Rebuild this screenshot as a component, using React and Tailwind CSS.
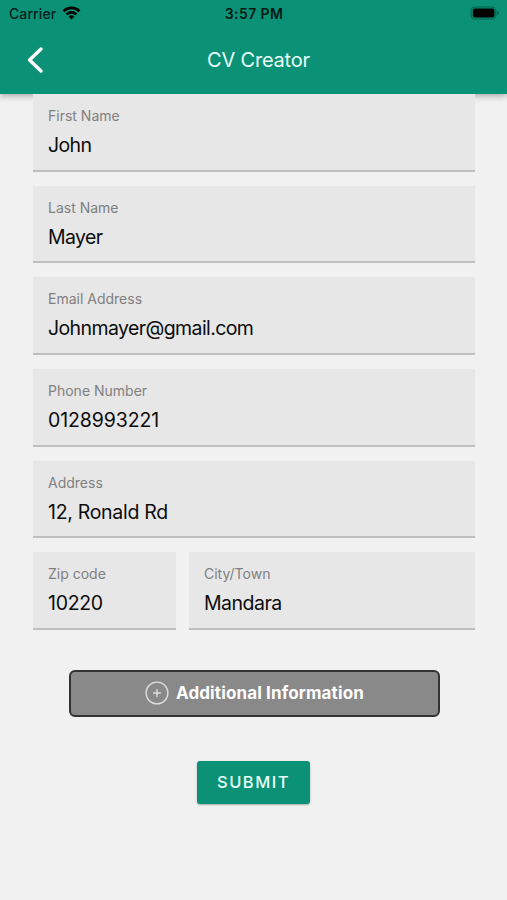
const StatusBar = () => (
  <div className="flex h-[28px] items-center justify-between pl-[9px] pr-[7px] text-[#03201a]">
    <div className="flex flex-1 items-center gap-[6px]">
      <span className="text-[14px] leading-[20px] tracking-[0.1px] -mt-[1px] font-medium">Carrier</span>
      <svg className="-mt-[2px] h-[14px] w-[19px]" viewBox="0 0 18 14" fill="none" stroke="#000" strokeWidth="2.6">
        <path d="M1 5.2a11.4 11.4 0 0 1 16 0" />
        <path d="M4.1 8.4a7 7 0 0 1 9.8 0" />
        <path d="M9 13.4 6.2 10.6a4 4 0 0 1 5.6 0Z" fill="#000" stroke="none" />
      </svg>
    </div>
    <span className="-mt-[2px] mr-[1px] text-[14px] font-semibold tracking-[0.4px] text-[#021a14]">3:57 PM</span>
    <div className="flex flex-1 justify-end">
      <svg className="-mt-[2px] h-[14px] w-[30px]" viewBox="0 0 30 14">
        <rect x="1.2" y="1" width="24.6" height="12" rx="3.6" fill="none" stroke="#06654f" strokeWidth="1.2" />
        <rect x="2.8" y="2.6" width="21.6" height="8.8" rx="2" fill="#000" />
        <path d="M27.2 4.8v4.4a2.3 2.3 0 0 0 0-4.4Z" fill="#06654f" />
      </svg>
    </div>
  </div>
);

const Header = () => (
  <header className="h-[94px] bg-[#0b9176] shadow-[0_2px_6px_rgba(0,0,0,0.3)]">
    <StatusBar />
    <div className="flex h-[64px] items-center">
      <button className="flex w-[80px] pl-[26px]" aria-label="Back">
        <svg className="h-[28px] w-[18px]" viewBox="0 0 18 28" fill="none" stroke="#fff" strokeWidth="3.4" strokeLinecap="round" strokeLinejoin="round">
          <path d="M15 3 3.5 14 15 25" />
        </svg>
      </button>
      <h1 className="flex-1 pr-[70px] text-center text-[20px] tracking-[-0.2px] text-[#e8fffa]">CV Creator</h1>
    </div>
  </header>
);

const Field = ({ label, value, tracking = 'tracking-[-0.6px]', className = 'w-full' }) => (
  <div className={`flex h-[77.67px] flex-col border-b-2 border-[#bfbfbf] bg-[#e7e7e7] pl-[15px] pt-[12px] ${className}`}>
    <span className="text-[14px] leading-[20px] text-[#808080]">{label}</span>
    <span className={`mt-[5px] text-[19.5px] leading-[28px] text-[#0c0c0c] ${tracking}`}>{value}</span>
  </div>
);

const fields = [
  { label: 'First Name', value: 'John' },
  { label: 'Last Name', value: 'Mayer' },
  { label: 'Email Address', value: 'Johnmayer@gmail.com' },
  { label: 'Phone Number', value: '0128993221', tracking: 'tracking-[-0.1px]' },
  { label: 'Address', value: '12, Ronald Rd', tracking: 'tracking-[-0.3px]' },
];

export default function App() {
  return (
    <div className="flex h-[900px] w-[507px] flex-col bg-[#f1f1f1] font-['Inter',sans-serif]">
      <Header />
      <main className="relative flex flex-col pl-[33px] pr-[32px]">
        <div className="flex flex-col gap-[14px]">
          {fields.map((field) => (
            <Field key={field.label} label={field.label} value={field.value} tracking={field.tracking} />
          ))}
          <div className="flex gap-[13px]">
            <Field label="Zip code" value="10220" tracking="tracking-[-0.3px]" className="w-[143px]" />
            <Field label="City/Town" value="Mandara" tracking="tracking-[-0.5px]" className="flex-1" />
          </div>
        </div>

        <button className="mt-[40px] ml-[36px] flex h-[47px] w-[371px] items-center justify-center gap-[7px] rounded-[6px] border-2 border-[#333] bg-[#898989]">
          <svg className="h-[24px] w-[24px]" viewBox="0 0 24 24" fill="none" stroke="#dedede" strokeWidth="1.4" strokeLinecap="round">
            <circle cx="12" cy="12" r="10.9" />
            <path d="M12 8.6v6.8M8.6 12h6.8" />
          </svg>
          <span className="text-[17px] font-bold tracking-[0.13px] text-white">Additional Information</span>
        </button>

        <button className="mt-[44px] ml-[164px] h-[43px] w-[113px] rounded-[3px] bg-[#0b9176] text-[16.5px] font-medium tracking-[1.5px] text-[#e8fffa] shadow-[0_1px_2px_rgba(0,0,0,0.3)]">
          SUBMIT
        </button>
      </main>
    </div>
  );
}
